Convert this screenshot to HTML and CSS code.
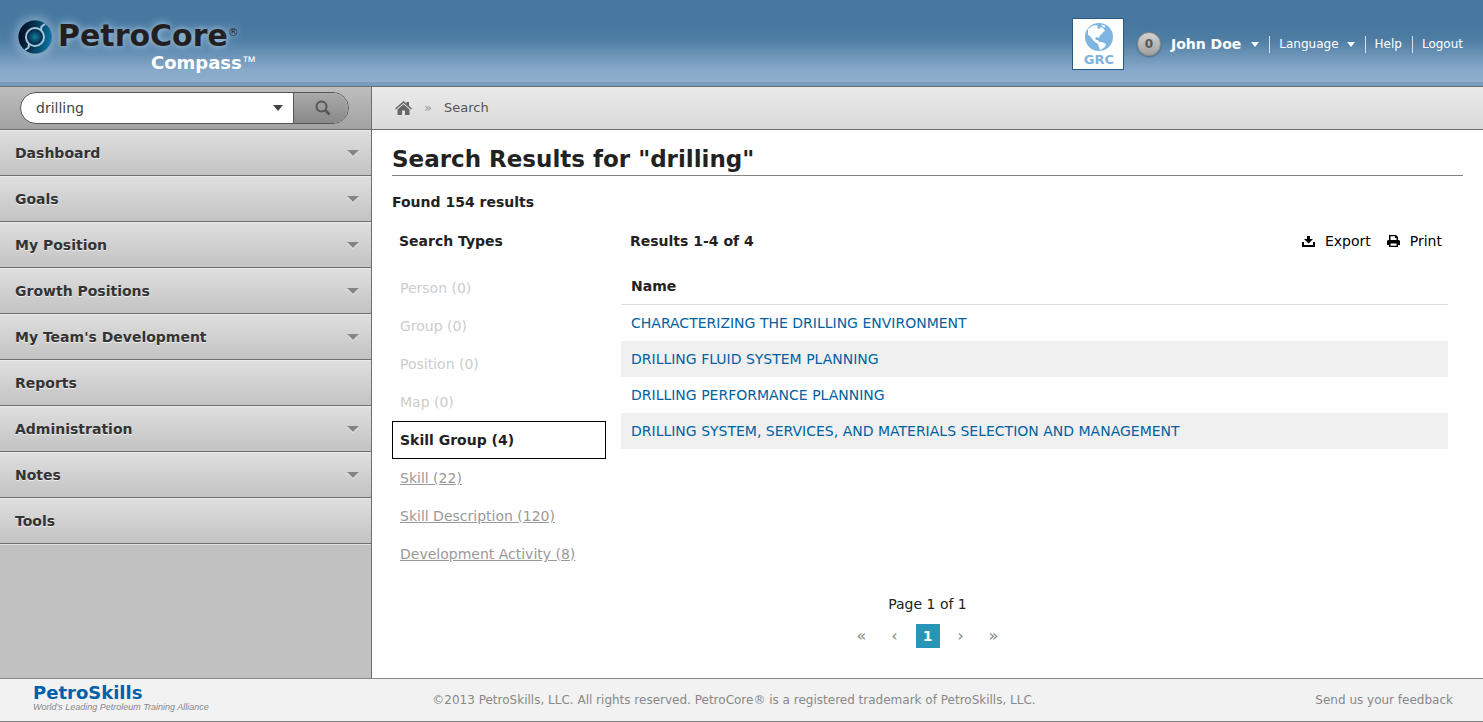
FILE: index.html
```html
<!DOCTYPE html>
<html lang="en">
<head>
<meta charset="utf-8">
<meta name="viewport" content="width=device-width, initial-scale=1">
<title>PetroCore Compass - Search</title>
<link rel="stylesheet" href="styles.css">
</head>
<body>
<header class="top">
  <a class="logo" href="#">
    <svg class="logo-mark" viewBox="0 0 34 34" width="34" height="34" aria-hidden="true">
      <defs>
        <linearGradient id="ring" x1="0" y1="0.4" x2="1" y2="0.6">
          <stop offset="0" stop-color="#020b22"/><stop offset="0.4" stop-color="#06304a"/><stop offset="1" stop-color="#0877a3"/>
        </linearGradient>
        <radialGradient id="core"><stop offset="0" stop-color="#10809c"/><stop offset="1" stop-color="#06294a"/></radialGradient>
      </defs>
      <circle cx="17" cy="17" r="16.500" fill="url(#ring)"/>
      <circle cx="17" cy="17" r="9" fill="none" stroke="#a9c5dc" stroke-width="2"/>
      <path d="M23 10.500L23.500 6.500L27 4M11 23.500L10.500 27.500L7 30" fill="none" stroke="#a9c5dc" stroke-width="2"/>
      <circle cx="17" cy="17" r="7.500" fill="url(#core)"/>
    </svg>
    <span class="logo-text">
      <span class="logo-name">PetroCore<span class="reg">®</span></span>
      <span class="logo-sub">Compass<span class="tm">™</span></span>
    </span>
  </a>
  <div class="account">
    <a class="client" href="#">
      <svg viewBox="0 0 28 28" width="28" height="28" aria-hidden="true">
        <circle cx="14" cy="14" r="14" fill="#7fb5e1"/>
        <path d="M3 6L7 3L11 2L13 3.500L12 5L14 6L16 4L18 5L20 8L18 9L17 11L15 12L14 15L12 14L10 15L11 17L13 17L14 19L17 19L21 21L20 24L17 26L15 27L14 24L13 21L10 19L7 16L5 13L3 12Z" fill="#fff"/>
        <path d="M16 1.500L20 2.500L20 4.500L18 4Z" fill="#fff"/>
      </svg>
      <span>GRC</span>
    </a>
    <button class="count" type="button" aria-label="Notifications">0</button>
    <button class="user" type="button">John Doe <i class="caret"></i></button>
    <nav class="links" aria-label="Account">
      <button class="link" type="button">Language <i class="caret"></i></button>
      <a class="link" href="#">Help</a>
      <a class="link" href="#">Logout</a>
    </nav>
  </div>
</header>

<div class="page">
  <aside class="side">
    <form class="search">
      <div class="search-box">
        <input type="text" value="drilling" aria-label="Search">
        <button class="scope" type="button" aria-label="Search options"><i class="caret"></i></button>
        <button class="go" type="submit" aria-label="Run search">
          <svg viewBox="0 0 16 16" width="16" height="16" aria-hidden="true"><circle cx="6.500" cy="6.500" r="5" fill="none" stroke="#555" stroke-width="2"/><path d="M10 10L14.500 14.500" stroke="#555" stroke-width="2.600"/></svg>
        </button>
      </div>
    </form>
    <nav class="menu" aria-label="Main">
      <a href="#">Dashboard<i class="caret"></i></a>
      <a href="#">Goals<i class="caret"></i></a>
      <a href="#">My Position<i class="caret"></i></a>
      <a href="#">Growth Positions<i class="caret"></i></a>
      <a href="#">My Team's Development<i class="caret"></i></a>
      <a href="#">Reports</a>
      <a href="#">Administration<i class="caret"></i></a>
      <a href="#">Notes<i class="caret"></i></a>
      <a href="#">Tools</a>
    </nav>
  </aside>

  <main class="main">
    <nav class="crumbs" aria-label="Breadcrumb">
      <a href="#" aria-label="Home">
        <svg viewBox="0 0 17 15" width="17" height="15" aria-hidden="true"><path d="M0 7.500L8.500 0L11.500 2.600V1H14V4.800L17 7.500L16 8.600L8.500 2L1 8.600Z" fill="#666"/><path d="M2.500 8.500L8.500 3.300L14.500 8.500V14H10V9.500H7V14H2.500Z" fill="#666"/></svg>
      </a>
      <span class="sep">»</span>
      <span>Search</span>
    </nav>
    <div class="content">
      <h1>Search Results for "drilling"</h1>
      <p class="found">Found 154 results</p>
      <div class="columns">
        <section class="types">
          <h2>Search Types</h2>
          <ul>
            <li>Person (0)</li>
            <li>Group (0)</li>
            <li>Position (0)</li>
            <li>Map (0)</li>
            <li class="current">Skill Group (4)</li>
            <li><a href="#">Skill (22)</a></li>
            <li><a href="#">Skill Description (120)</a></li>
            <li><a href="#">Development Activity (8)</a></li>
          </ul>
        </section>
        <section class="results">
          <div class="results-head">
            <h2>Results 1-4 of 4</h2>
            <div class="tools">
              <button type="button"><svg viewBox="0 0 13 12" width="13" height="12" aria-hidden="true"><path d="M5 1H8V4H11L6.500 8.500L2 4H5Z"/><path d="M0 7H2V10H11V7H13V12H0Z"/></svg>Export</button>
              <button type="button"><svg viewBox="0 0 13 12" width="13" height="12" aria-hidden="true"><path d="M2 0H9L11 2V5H12L13 6V10H11V12H2V10H0V6L1 5H2ZM3.500 1.300V5H9.500V3H8V1.300ZM3.500 8.500V10.700H9.500V8.500Z" fill-rule="evenodd"/></svg>Print</button>
            </div>
          </div>
          <table>
            <thead><tr><th scope="col">Name</th></tr></thead>
            <tbody>
              <tr><td><a href="#">CHARACTERIZING THE DRILLING ENVIRONMENT</a></td></tr>
              <tr><td><a href="#">DRILLING FLUID SYSTEM PLANNING</a></td></tr>
              <tr><td><a href="#">DRILLING PERFORMANCE PLANNING</a></td></tr>
              <tr><td><a href="#">DRILLING SYSTEM, SERVICES, AND MATERIALS SELECTION AND MANAGEMENT</a></td></tr>
            </tbody>
          </table>
        </section>
      </div>
      <div class="paging">
        <p>Page 1 of 1</p>
        <nav class="pager" aria-label="Pages">
          <a href="#" aria-label="First">«</a>
          <a href="#" aria-label="Previous">‹</a>
          <a class="on" href="#" aria-current="page">1</a>
          <a href="#" aria-label="Next">›</a>
          <a href="#" aria-label="Last">»</a>
        </nav>
      </div>
    </div>
  </main>
</div>

<footer class="foot">
  <a class="brand" href="#">
    <strong>PetroSkills</strong>
    <em>World's Leading Petroleum Training Alliance</em>
  </a>
  <p>©2013 PetroSkills, LLC. All rights reserved. PetroCore® is a registered trademark of PetroSkills, LLC.</p>
  <a class="feedback" href="#">Send us your feedback</a>
</footer>
</body>
</html>
```

FILE: styles.css
```css
*, *::before, *::after { box-sizing: border-box; }
body {
  margin: 0;
  min-height: 100vh;
  display: flex;
  flex-direction: column;
  font: 14px/18px Verdana, "DejaVu Sans", sans-serif;
  color: #222;
  background: #fff;
}
a { color: inherit; text-decoration: none; }
button, input { font: inherit; color: inherit; background: none; border: 0; padding: 0; margin: 0; }
button { cursor: pointer; }
h1, h2, p, ul { margin: 0; padding: 0; }
svg { display: block; flex: none; }

.caret {
  display: inline-block;
  flex: none;
  width: 0;
  border: 5px solid transparent;
  border-top-color: currentColor;
  border-bottom: 0;
}

/* Header */
.top {
  display: flex;
  justify-content: space-between;
  align-items: flex-start;
  height: 87px;
  padding: 18px 20px 0 18px;
  border-bottom: 1px solid #6e6e6e;
  background: linear-gradient(#4878a0 0, #4878a0 28px, #4f7da4 40px, #86a9c9 70px, #8fb0ce 82px, #749dbf 82px, #749dbf 100%);
  color: #fff;
}
.logo { display: flex; align-items: flex-start; gap: 6px; }
.logo-mark { margin-top: 2px; border-radius: 50%; box-shadow: 0 0 10px 3px rgba(170, 200, 225, .6); }
.logo-text { display: flex; flex-direction: column; font-family: "DejaVu Sans", sans-serif; font-weight: bold; }
.logo-name { font-size: 30px; line-height: 36px; color: #231f20; text-shadow: 0 0 10px #9fc0dc, 0 0 5px #8fb3d2; }
.reg { font-size: 11px; line-height: 1px; font-weight: normal; vertical-align: 10px; }
.logo-sub { font-size: 18px; line-height: 18px; padding-left: 93px; white-space: nowrap; }
.tm { font: 14px/1px "Liberation Sans", Arial, sans-serif; vertical-align: 3px; }

.account { display: flex; align-items: center; }
.client {
  width: 52px;
  height: 52px;
  padding: 4px 0 0 2px;
  display: flex;
  flex-direction: column;
  align-items: center;
  gap: 2px;
  background: #fff;
  border: 1px solid #2c5a80;
  color: #7fb3df;
  font-weight: bold;
  font-size: 13px;
  line-height: 14px;
}
.count {
  width: 24px;
  height: 24px;
  margin-left: 13px;
  border: 1px solid #8b8b86;
  border-radius: 50%;
  background: linear-gradient(#d2d2d2, #a0a0a0);
  box-shadow: 0 1px 2px rgba(0, 0, 0, .3);
  color: #555;
  font-weight: bold;
  font-size: 12px;
}
.user { display: flex; align-items: center; gap: 10px; margin: 0 10px; font-weight: bold; }
.links { display: flex; }
.link {
  display: flex;
  align-items: center;
  gap: 8px;
  padding: 0 10px 0 9px;
  border-left: 1px solid #d5e1ec;
  font-size: 12px;
  line-height: 17px;
}
.link:last-child { padding-right: 0; }
.links .caret, .user .caret { border-width: 5px 4px 0; }

/* Layout */
.page { flex: 1; display: grid; grid-template-columns: 372px 1fr; }
.side { background: #c1c1c1; border-right: 1px solid #6e6e6e; }

.search {
  height: 43px;
  padding: 5px 20px;
  border-bottom: 1px solid #6e6e6e;
  background: linear-gradient(#bebebe, #a2a2a2);
}
.search-box {
  display: flex;
  height: 32px;
  margin-right: 2px;
  border: 1px solid #555;
  border-radius: 16px;
  overflow: hidden;
  background: #fff;
}
.search-box input { flex: 1; min-width: 0; padding: 0 15px; color: #444; }
.scope { width: 31px; color: #444; }
.scope .caret { display: block; margin: 0 auto; border-width: 6px 5px 0; }
.go { width: 55px; padding-left: 4px; display: grid; place-items: center; border-left: 1px solid #555; background: linear-gradient(#aaa, #888); }

.menu a {
  display: flex;
  justify-content: space-between;
  align-items: center;
  height: 46px;
  padding: 0 12px 0 15px;
  border-bottom: 1px solid #6e6e6e;
  background: linear-gradient(#dfdfdf, #c3c3c3);
  box-shadow: inset 0 1px #ebebeb;
  font-weight: bold;
  color: #333;
  text-shadow: 0 1px #eee;
}
.menu .caret { color: #858585; border-width: 6px 6px 0; filter: drop-shadow(0 1px #eee); }
.menu { border-bottom: 1px solid #e2e2e2; }

/* Content */
.crumbs {
  display: flex;
  align-items: center;
  gap: 12px;
  height: 43px;
  padding: 0 23px;
  border-bottom: 1px solid #6e6e6e;
  background: linear-gradient(#eaeaea, #dadada);
  font-size: 13px;
  color: #555;
}
.sep { color: #999; }
.content { padding: 14px 20px 30px; }
h1 { font-size: 23px; line-height: 30px; padding-bottom: 1px; border-bottom: 1px solid #858585; }
h2, .found { font-size: 14px; font-weight: bold; line-height: 18px; }
.found { margin-top: 17px; }
.columns { display: grid; grid-template-columns: 214px 1fr; gap: 15px; margin: 21px 15px 0 0; }
.types h2 { padding-left: 7px; }
.types ul { list-style: none; margin-top: 19px; }
.types li { height: 38px; padding: 9px 7px; border: 1px solid transparent; color: #ccc; }
.types a { color: #999; text-decoration: underline; }
.types .current { border-color: #000; color: #222; font-weight: bold; }
.results-head { display: flex; justify-content: space-between; padding: 0 6px 0 9px; }
.tools { display: flex; gap: 16px; color: #000; }
.tools button { display: flex; align-items: center; gap: 10px; }
table { width: 100%; margin-top: 18px; border-collapse: collapse; }
th, td { padding: 9px 10px; text-align: left; line-height: 18px; }
th { border-bottom: 1px solid #ddd; }
td { color: #0061a1; }
tbody tr:nth-child(even) { background: #f0f0f0; }

.paging { display: flex; flex-direction: column; align-items: center; gap: 11px; margin-top: 22px; }
.pager { display: flex; gap: 9px; }
.pager a { width: 24px; line-height: 24px; text-align: center; color: #888; }
.pager a:not(.on) { font-size: 16px; }
.pager .on { background: #2795b6; color: #fff; font-weight: bold; }

/* Footer */
.foot {
  display: grid;
  grid-template-columns: 1fr auto 1fr;
  align-items: center;
  height: 44px;
  padding: 0 30px 0 33px;
  border: solid #858585;
  border-width: 1px 0;
  background: #f2f2f2;
  color: #888;
  font-size: 12px;
}
.foot p { margin-right: 18px; }
.brand { display: flex; flex-direction: column; }
.brand strong { color: #0061a8; font: bold 18px/14px "DejaVu Sans", sans-serif; }
.brand em { font: italic 9px/14px "Liberation Sans", Arial, sans-serif; }
.feedback { justify-self: end; }
```
